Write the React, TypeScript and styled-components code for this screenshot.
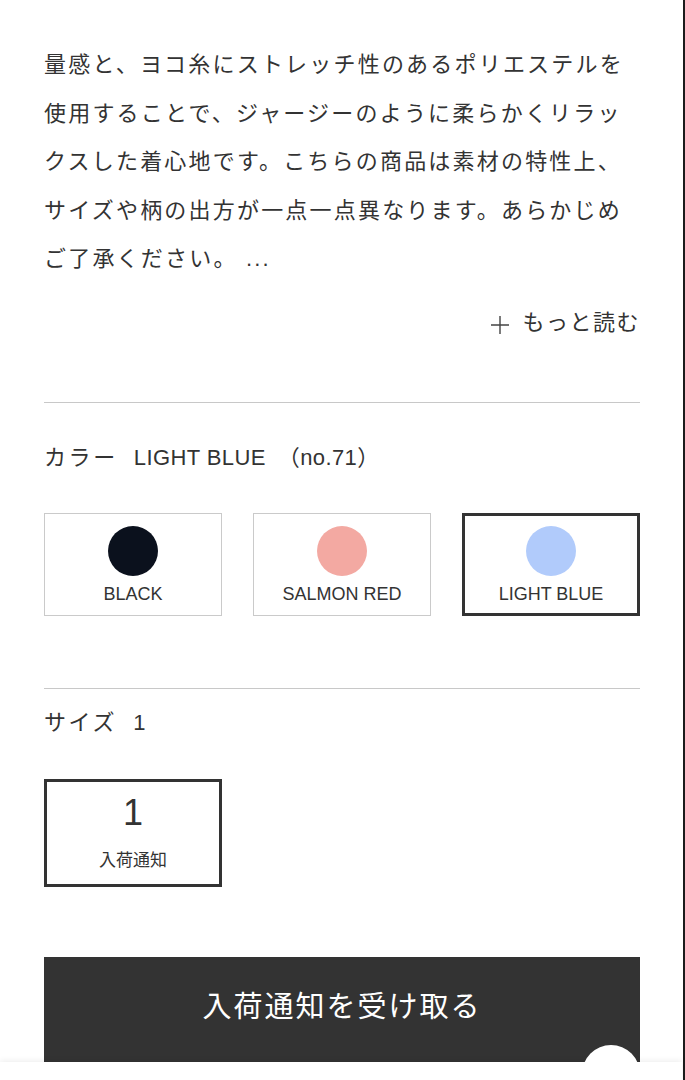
import React, { useState } from 'react';
import styled, { createGlobalStyle } from 'styled-components';

const GlobalStyle = createGlobalStyle`
  html, body {
    margin: 0;
    padding: 0;
    background: #fff;
  }
  body {
    font-family: "Liberation Sans", "Noto Sans CJK JP", sans-serif;
    color: #333;
    -webkit-font-smoothing: antialiased;
  }
`;

interface ColorOption {
  name: string;
  code: string;
  swatch: string;
}

const colors: ColorOption[] = [
  { name: 'BLACK', code: 'no.09', swatch: '#0b111d' },
  { name: 'SALMON RED', code: 'no.32', swatch: '#f3a9a2' },
  { name: 'LIGHT BLUE', code: 'no.71', swatch: '#b1cbfb' },
];

const App: React.FC = () => {
  const [selected, setSelected] = useState(2);
  const current = colors[selected];

  return (
    <Frame>
      <GlobalStyle />
      <Content>
        <Description>
          量感と、ヨコ糸にストレッチ性のあるポリエステルを使用することで、ジャージーのように柔らかくリラックスした着心地です。こちらの商品は素材の特性上、サイズや柄の出方が一点一点異なります。あらかじめご了承ください。 ...
        </Description>
        <MoreRow>
          <MoreLink>
            <PlusIcon width="20" height="20" viewBox="0 0 20 20">
              <path d="M10 1v18M1 10h18" stroke="#444" strokeWidth="1.4" fill="none" />
            </PlusIcon>
            もっと読む
          </MoreLink>
        </MoreRow>

        <Divider />

        <OptionLabel $top={40}>
          <LabelTitle>カラー</LabelTitle>
          <Gap $w={16} />
          {current.name}
          <Gap $w={12} />（{current.code}）
        </OptionLabel>
        <SwatchGrid>
          {colors.map((c, i) => (
            <SwatchButton key={c.name} $active={i === selected} onClick={() => setSelected(i)}>
              <Dot $color={c.swatch} />
              <SwatchName>{c.name}</SwatchName>
            </SwatchButton>
          ))}
        </SwatchGrid>

        <Divider $top={72} />

        <OptionLabel $top={19}>
          <LabelTitle>サイズ</LabelTitle>
          <Gap $w={16} />1
        </OptionLabel>
        <SizeGrid>
          <SizeBox>
            <SizeValue>1</SizeValue>
            <SizeNote>入荷通知</SizeNote>
          </SizeBox>
        </SizeGrid>

        <NotifyButton>入荷通知を受け取る</NotifyButton>
      </Content>

      <BottomBar />
      <FloatingButton />
    </Frame>
  );
};

const Frame = styled.div`
  position: relative;
  width: 685px;
  min-height: 100vh;
  box-sizing: border-box;
  border-right: 2px solid #1c1c1c;
  overflow: hidden;
`;

const Content = styled.div`
  padding: 41px 43px 40px 44px;
`;

const Description = styled.p`
  margin: 0;
  font-size: 22px;
  line-height: 48.5px;
  letter-spacing: 2.2px;
  color: #333;
  word-break: break-all;
`;

const MoreRow = styled.div`
  display: flex;
  justify-content: flex-end;
  margin-top: 24px;
`;

const MoreLink = styled.a`
  display: flex;
  align-items: center;
  gap: 12px;
  font-size: 22px;
  line-height: 30px;
  letter-spacing: 1.5px;
  color: #333;
  cursor: pointer;
`;

const PlusIcon = styled.svg`
  display: block;
  margin-top: 4px;
`;

const Divider = styled.hr<{ $top?: number }>`
  margin: ${(p) => p.$top ?? 64}px 0 0;
  border: none;
  border-top: 1px solid #c8c8c8;
  height: 0;
`;

const OptionLabel = styled.div<{ $top: number }>`
  margin-top: ${(p) => p.$top}px;
  font-size: 22px;
  line-height: 30px;
  letter-spacing: 0.4px;
  color: #333;
  display: flex;
  align-items: center;
`;

const LabelTitle = styled.span`
  letter-spacing: 2.6px;
`;

const Gap = styled.span<{ $w: number }>`
  display: inline-block;
  width: ${(p) => p.$w}px;
`;

const SwatchGrid = styled.div`
  display: grid;
  grid-template-columns: repeat(3, 1fr);
  column-gap: 31px;
  margin-top: 40px;
`;

const SwatchButton = styled.button<{ $active: boolean }>`
  height: 103px;
  box-sizing: border-box;
  background: #fff;
  border: ${(p) => (p.$active ? '3px solid #333' : '1px solid #cacaca')};
  padding: ${(p) => (p.$active ? '10px' : '12px')} 0 0;
  display: flex;
  flex-direction: column;
  align-items: center;
  cursor: pointer;
  font-family: inherit;
`;

const Dot = styled.span<{ $color: string }>`
  width: 50px;
  height: 50px;
  border-radius: 50%;
  background: ${(p) => p.$color};
`;

const SwatchName = styled.span`
  margin-top: 8px;
  font-size: 18px;
  line-height: 20px;
  color: #333;
`;

const SizeGrid = styled.div`
  display: grid;
  grid-template-columns: repeat(3, 1fr);
  column-gap: 31px;
  margin-top: 41px;
`;

const SizeBox = styled.button`
  height: 108px;
  box-sizing: border-box;
  background: #fff;
  border: 3px solid #333;
  display: flex;
  flex-direction: column;
  align-items: center;
  padding: 11px 0 0;
  font-family: inherit;
  cursor: pointer;
`;

const SizeValue = styled.span`
  font-size: 36px;
  line-height: 40px;
  color: #333;
`;

const SizeNote = styled.span`
  margin-top: 16px;
  font-size: 17px;
  line-height: 24px;
  color: #333;
`;

const NotifyButton = styled.button`
  display: block;
  width: 100%;
  height: 112px;
  margin-top: 70px;
  padding: 0 0 18px;
  background: #333;
  color: #fff;
  border: none;
  font-family: "Noto Sans CJK JP", sans-serif;
  font-size: 29px;
  letter-spacing: 2px;
  cursor: pointer;
`;

const BottomBar = styled.div`
  position: fixed;
  left: 0;
  bottom: 0;
  width: 682px;
  height: 18px;
  background: #fff;
  box-shadow: 0 -1px 6px rgba(0, 0, 0, 0.08);
`;

const FloatingButton = styled.div`
  position: fixed;
  left: 582px;
  top: 1045px;
  width: 58px;
  height: 58px;
  border-radius: 50%;
  background: #fff;
`;

export default App;
